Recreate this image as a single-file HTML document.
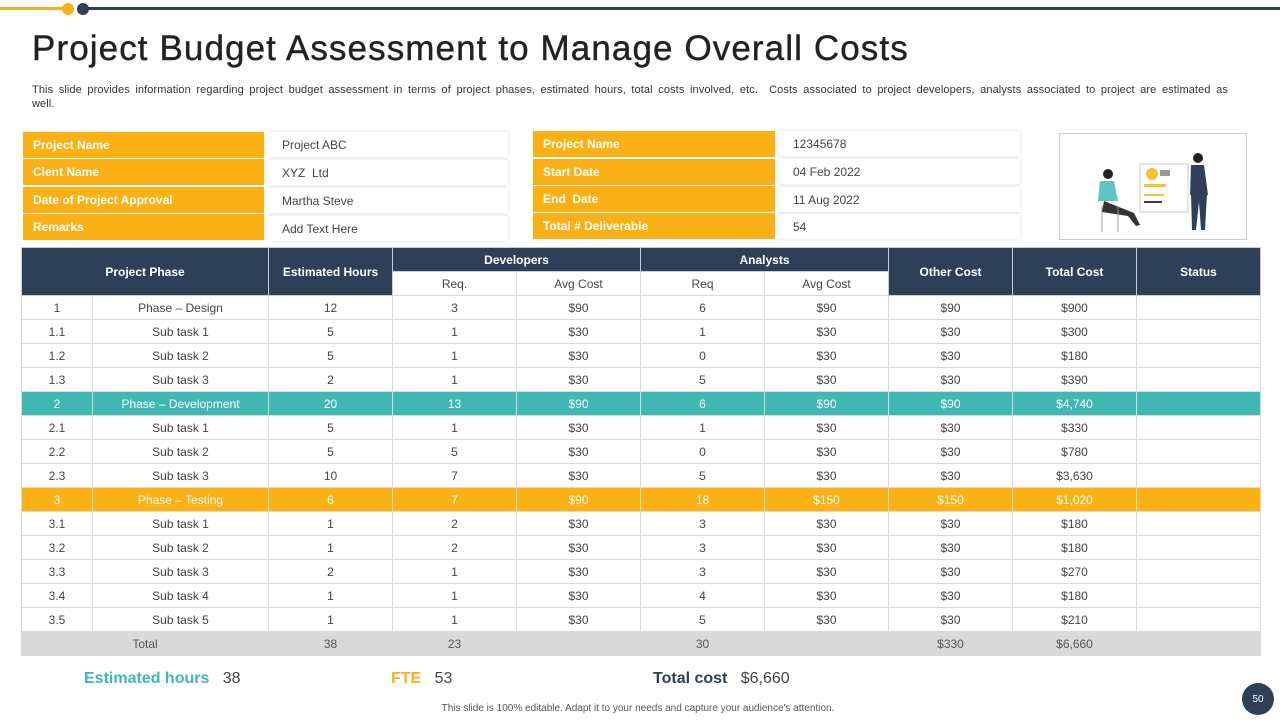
<!DOCTYPE html>
<html><head><meta charset="utf-8"><style>
*{margin:0;padding:0;box-sizing:border-box}
body{width:1280px;height:720px;position:relative;background:#fff;font-family:"Liberation Sans",sans-serif;overflow:hidden;color:#444}
.a{position:absolute}
h1{position:absolute;left:32px;top:29px;font-size:35px;font-weight:normal;color:#222;letter-spacing:1.1px;white-space:nowrap;-webkit-text-stroke:0.4px #222}
.desc{left:32px;top:83px;width:1230px;font-size:11px;line-height:14px;color:#333;letter-spacing:0.1px;word-spacing:2.4px;white-space:nowrap}
.lab{background:#fbb116;color:#fff;font-weight:bold;font-size:12px;padding-left:10px;display:flex;align-items:center}
.val{background:#fff;box-shadow:0 0 3px rgba(0,0,0,.15);font-size:12px;color:#444;padding-left:14px;display:flex;align-items:center}
table{position:absolute;left:21px;top:247px;border-collapse:collapse;table-layout:fixed;width:1239px}
td,th{border:1px solid #d9d9d9;text-align:center;font-size:12px;height:24px;padding:0;color:#444;font-weight:normal}
th.h{background:#2e4057;color:#fff;font-weight:bold;border-color:#c8ced6}
tr.t td{background:#3fb8b4;color:#fff}
tr.y td{background:#fbb116;color:#fff}
tr.g td{background:#d9d9d9;color:#555}
</style></head><body>
<div class="a" style="left:0;top:7px;width:66px;height:3px;background:#fbb116"></div>
<div class="a" style="left:62px;top:3px;width:12px;height:12px;border-radius:50%;background:#fbb116"></div>
<div class="a" style="left:77px;top:3px;width:12px;height:12px;border-radius:50%;background:#2e4057"></div>
<div class="a" style="left:86px;top:7px;width:1194px;height:3px;background:#2e4057"></div>
<h1>Project Budget Assessment to Manage Overall Costs</h1>
<div class="a desc">This slide provides information regarding project budget assessment in terms of project phases, estimated hours, total costs involved, etc. &nbsp;Costs associated to project developers, analysts associated to project are estimated as<br>well.</div>

<div class="a lab" style="left:23px;top:132px;width:241px;height:26px">Project Name</div>
<div class="a lab" style="left:23px;top:159px;width:241px;height:26px">Clent Name</div>
<div class="a lab" style="left:23px;top:187px;width:241px;height:26px">Date of Project Approval</div>
<div class="a lab" style="left:23px;top:214px;width:241px;height:26px">Remarks</div>
<div class="a val" style="left:268px;top:132px;width:240px;height:25px">Project ABC</div>
<div class="a val" style="left:268px;top:160px;width:240px;height:25px">XYZ&nbsp; Ltd</div>
<div class="a val" style="left:268px;top:188px;width:240px;height:25px">Martha Steve</div>
<div class="a val" style="left:268px;top:216px;width:240px;height:25px">Add Text Here</div>

<div class="a lab" style="left:533px;top:131px;width:242px;height:26px">Project Name</div>
<div class="a lab" style="left:533px;top:159px;width:242px;height:26px">Start Date</div>
<div class="a lab" style="left:533px;top:186px;width:242px;height:26px">End &nbsp;Date</div>
<div class="a lab" style="left:533px;top:213px;width:242px;height:26px">Total # Deliverable</div>
<div class="a val" style="left:779px;top:131px;width:241px;height:25px">12345678</div>
<div class="a val" style="left:779px;top:159px;width:241px;height:25px">04 Feb 2022</div>
<div class="a val" style="left:779px;top:187px;width:241px;height:25px">11 Aug 2022</div>
<div class="a val" style="left:779px;top:214px;width:241px;height:25px">54</div>

<div class="a" style="left:1059px;top:133px;width:188px;height:107px;border:1px solid #ccc">
<svg width="186" height="105" viewBox="0 0 186 105">
<rect x="80" y="30" width="48" height="48" fill="#fff" stroke="#ccc"/>
<circle cx="92" cy="40" r="6" fill="#f7c231"/>
<rect x="100" y="36" width="10" height="6" fill="#999"/>
<rect x="84" y="50" width="22" height="3" fill="#f7c231"/>
<rect x="84" y="60" width="20" height="2" fill="#f7c231"/>
<rect x="84" y="67" width="18" height="2" fill="#2e4057"/>
<circle cx="48" cy="40" r="5" fill="#222"/>
<path d="M40 47 h14 l4 20 h-20 z" fill="#5cc6bf"/>
<path d="M44 67 l30 12 l6 12 l-4 1 l-8 -10 l-26 -4 z" fill="#333"/>
<line x1="42" y1="72" x2="42" y2="98" stroke="#999"/><line x1="58" y1="72" x2="58" y2="98" stroke="#999"/>
<circle cx="138" cy="24" r="5" fill="#222"/>
<path d="M131 31 h13 l4 30 h-18 z" fill="#2e4057"/>
<path d="M131 60 h16 l-2 36 h-4 l-2 -28 l-3 28 h-4 z" fill="#2e4057"/>
</svg></div>

<table>
<colgroup><col style="width:71px"><col style="width:176px"><col style="width:124px"><col style="width:124px"><col style="width:124px"><col style="width:124px"><col style="width:124px"><col style="width:124px"><col style="width:124px"><col style="width:124px"></colgroup>
<tr><th class="h" colspan="2" rowspan="2">Project Phase</th><th class="h" rowspan="2">Estimated Hours</th><th class="h" colspan="2">Developers</th><th class="h" colspan="2">Analysts</th><th class="h" rowspan="2">Other Cost</th><th class="h" rowspan="2">Total Cost</th><th class="h" rowspan="2">Status</th></tr>
<tr><td>Req.</td><td>Avg Cost</td><td>Req</td><td>Avg Cost</td></tr>
<tr><td>1</td><td>Phase – Design</td><td>12</td><td>3</td><td>$90</td><td>6</td><td>$90</td><td>$90</td><td>$900</td><td></td></tr>
<tr><td>1.1</td><td>Sub task 1</td><td>5</td><td>1</td><td>$30</td><td>1</td><td>$30</td><td>$30</td><td>$300</td><td></td></tr>
<tr><td>1.2</td><td>Sub task 2</td><td>5</td><td>1</td><td>$30</td><td>0</td><td>$30</td><td>$30</td><td>$180</td><td></td></tr>
<tr><td>1.3</td><td>Sub task 3</td><td>2</td><td>1</td><td>$30</td><td>5</td><td>$30</td><td>$30</td><td>$390</td><td></td></tr>
<tr class="t"><td>2</td><td>Phase – Development</td><td>20</td><td>13</td><td>$90</td><td>6</td><td>$90</td><td>$90</td><td>$4,740</td><td></td></tr>
<tr><td>2.1</td><td>Sub task 1</td><td>5</td><td>1</td><td>$30</td><td>1</td><td>$30</td><td>$30</td><td>$330</td><td></td></tr>
<tr><td>2.2</td><td>Sub task 2</td><td>5</td><td>5</td><td>$30</td><td>0</td><td>$30</td><td>$30</td><td>$780</td><td></td></tr>
<tr><td>2.3</td><td>Sub task 3</td><td>10</td><td>7</td><td>$30</td><td>5</td><td>$30</td><td>$30</td><td>$3,630</td><td></td></tr>
<tr class="y"><td>3</td><td>Phase – Testing</td><td>6</td><td>7</td><td>$90</td><td>18</td><td>$150</td><td>$150</td><td>$1,020</td><td></td></tr>
<tr><td>3.1</td><td>Sub task 1</td><td>1</td><td>2</td><td>$30</td><td>3</td><td>$30</td><td>$30</td><td>$180</td><td></td></tr>
<tr><td>3.2</td><td>Sub task 2</td><td>1</td><td>2</td><td>$30</td><td>3</td><td>$30</td><td>$30</td><td>$180</td><td></td></tr>
<tr><td>3.3</td><td>Sub task 3</td><td>2</td><td>1</td><td>$30</td><td>3</td><td>$30</td><td>$30</td><td>$270</td><td></td></tr>
<tr><td>3.4</td><td>Sub task 4</td><td>1</td><td>1</td><td>$30</td><td>4</td><td>$30</td><td>$30</td><td>$180</td><td></td></tr>
<tr><td>3.5</td><td>Sub task 5</td><td>1</td><td>1</td><td>$30</td><td>5</td><td>$30</td><td>$30</td><td>$210</td><td></td></tr>
<tr class="g"><td colspan="2">Total</td><td>38</td><td>23</td><td></td><td>30</td><td></td><td>$330</td><td>$6,660</td><td></td></tr>
</table>

<div class="a" style="left:84px;top:670px;font-size:16px;white-space:nowrap"><b style="color:#3fb8b4">Estimated hours</b>&nbsp;&nbsp; <span style="color:#444">38</span></div>
<div class="a" style="left:391px;top:670px;font-size:16px;white-space:nowrap"><b style="color:#fbb116">FTE</b>&nbsp;&nbsp; <span style="color:#444">53</span></div>
<div class="a" style="left:653px;top:670px;font-size:16px;white-space:nowrap"><b style="color:#2e4057">Total cost</b>&nbsp;&nbsp; <span style="color:#444">$6,660</span></div>
<div class="a" style="left:0;width:1276px;top:703px;text-align:center;font-size:10px;color:#555">This slide is 100% editable. Adapt it to your needs and capture your audience's attention.</div>
<div class="a" style="left:1242px;top:683px;width:32px;height:32px;border-radius:50%;background:#2e4057;color:#fff;font-size:10px;display:flex;align-items:center;justify-content:center">50</div>
</body></html>
